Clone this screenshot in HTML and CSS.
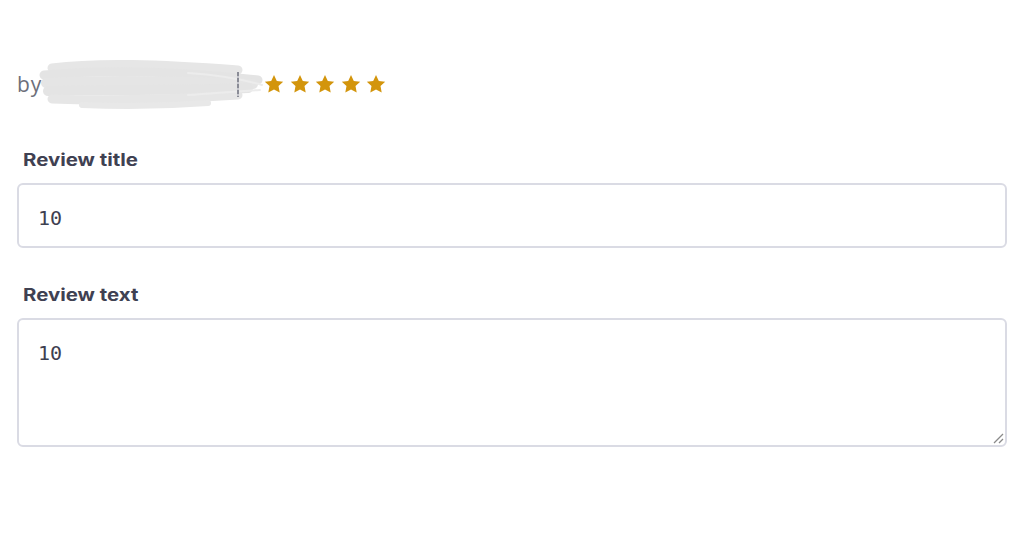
FILE: index.html
```html
<!DOCTYPE html>
<html>
<head>
<meta charset="utf-8">
<link rel="stylesheet" href="styles.css">
</head>
<body>
<div class="page">
  <div class="byline">
    <span class="by">by</span>
    <span class="name">
      <svg class="scribble" width="226" height="52" viewBox="0 0 226 52">
        <g fill="none" stroke-linecap="round">
          <path d="M14 10 C60 4 120 6 200 12" stroke="#e6e6e6" stroke-width="9"/>
          <path d="M6 17 C70 11 140 13 220 22" stroke="#e4e4e4" stroke-width="9"/>
          <path d="M8 25 C70 21 140 23 215 26" stroke="#e5e5e5" stroke-width="10"/>
          <path d="M10 33 C70 31 140 33 210 30" stroke="#e4e4e4" stroke-width="10"/>
          <path d="M14 41 C70 43 140 41 200 37" stroke="#e6e6e6" stroke-width="9"/>
          <path d="M44 47 C90 49 130 48 170 45" stroke="#e8e8e8" stroke-width="6"/>
          <path d="M150 15 C180 17 200 20 224 27" stroke="#ececec" stroke-width="2"/>
          <path d="M150 37 C180 35 200 33 222 32" stroke="#ececec" stroke-width="2"/>
        </g>
      </svg>
      <span class="caret"></span>
    </span>
    <span class="stars">
      <svg viewBox="0 0 20 20" width="20" height="20"><path d="M10 1l2.8 5.9 6.4.8-4.7 4.4 1.2 6.4L10 15.4l-5.7 3.1 1.2-6.4L.8 7.7l6.4-.8z" fill="#d3950c"/></svg>
      <svg viewBox="0 0 20 20" width="20" height="20"><path d="M10 1l2.8 5.9 6.4.8-4.7 4.4 1.2 6.4L10 15.4l-5.7 3.1 1.2-6.4L.8 7.7l6.4-.8z" fill="#d3950c"/></svg>
      <svg viewBox="0 0 20 20" width="20" height="20"><path d="M10 1l2.8 5.9 6.4.8-4.7 4.4 1.2 6.4L10 15.4l-5.7 3.1 1.2-6.4L.8 7.7l6.4-.8z" fill="#d3950c"/></svg>
      <svg viewBox="0 0 20 20" width="20" height="20"><path d="M10 1l2.8 5.9 6.4.8-4.7 4.4 1.2 6.4L10 15.4l-5.7 3.1 1.2-6.4L.8 7.7l6.4-.8z" fill="#d3950c"/></svg>
      <svg viewBox="0 0 20 20" width="20" height="20"><path d="M10 1l2.8 5.9 6.4.8-4.7 4.4 1.2 6.4L10 15.4l-5.7 3.1 1.2-6.4L.8 7.7l6.4-.8z" fill="#d3950c"/></svg>
    </span>
  </div>
  <div class="field">
    <label class="label">Review title</label>
    <div class="input">10</div>
  </div>
  <div class="field">
    <label class="label">Review text</label>
    <div class="input textarea">10
      <svg class="grip" width="14" height="14" viewBox="0 0 14 14"><path d="M13 4L4 13M13 9L9 13" stroke="#8a8a8a" stroke-width="1.3"/></svg>
    </div>
  </div>
</div>
</body>
</html>
```
FILE: styles.css
```css
html, body { margin: 0; padding: 0; background: #fff; }
body { font-family: Inter, "Noto Sans", sans-serif; color: #3b3d4f; }
.page { padding: 59px 17px 0 17px; }
.byline { display: flex; align-items: center; height: 50px; }
.by { font-size: 21px; letter-spacing: 1px; color: #6d6f7a; font-family: "Open Sans", sans-serif; width: 25px; }
.name { position: relative; display: inline-block; width: 222px; height: 50px; }
.scribble { position: absolute; left: -4px; top: -1px; }
.caret { position: absolute; left: 195px; top: 13px; width: 2px; height: 25px; background: repeating-linear-gradient(#8a8c96 0 4px, #c4c5cc 4px 6px); }
.stars { display: flex; gap: 5.5px; }
.field { margin-top: 41px; }
.field + .field { margin-top: 37px; }
.label { display: block; width: max-content; font-weight: 700; font-size: 17px; color: #3f4152; margin: 0 0 13px 6px; transform: scaleX(1.2); transform-origin: left center; }
.input { position: relative; box-sizing: border-box; height: 65px; border: 2px solid #dadbe4; border-radius: 6px; padding: 21px 19px 19px; font-family: "DejaVu Sans Mono", monospace; font-size: 20px; color: #3e4050; line-height: 24px; }
.textarea { height: 129px; }
.grip { position: absolute; right: 1px; bottom: 1px; }
```
